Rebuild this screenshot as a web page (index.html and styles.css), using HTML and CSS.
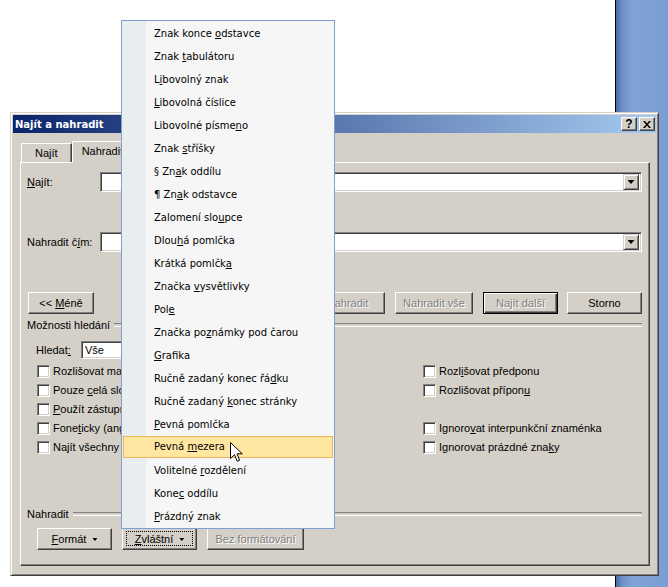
FILE: index.html
```html
<!DOCTYPE html>
<html lang="cs">

<head>
  <meta charset="UTF-8">
  <meta name="viewport" content="width=device-width, initial-scale=1.0">
  <title>Najít a nahradit</title>
  <link rel="stylesheet" href="styles.css">
</head>

<body>
  <div class="desktop">
    <div class="document"></div>
    <div class="workspace"></div>
  </div>

  <div class="dialog">
    <div class="titlebar">
      <span class="title">Najít a nahradit</span>
      <div class="title-buttons">
        <span class="tb-btn help">?</span>
        <span class="tb-btn">
          <svg width="8" height="7" viewBox="0 0 8 7"><path d="M0 0h2l2 2.5 2-2.5h2L5 3.5 8 7H6L4 4.5 2 7H0l3-3.5z" fill="#000"/></svg>
        </span>
      </div>
    </div>

    <div class="tabs">
      <div class="tab">Na<u>j</u>ít</div>
      <div class="tab active">Nahradit</div>
      <div class="tab">Přejít na</div>
    </div>

    <div class="panel">
      <div class="field-row">
        <label class="field-label"><u>N</u>ajít:</label>
        <div class="combo"><span class="combo-btn"></span></div>
      </div>

      <div class="field-row second">
        <label class="field-label">Nahradit č<u>í</u>m:</label>
        <div class="combo"><span class="combo-btn"></span></div>
      </div>

      <div class="button-row">
        <button class="btn less">&lt;&lt; <u>M</u>éně</button>
        <button class="btn off replace">Nahradit</button>
        <button class="btn off replace-all">Nahradit vše</button>
        <button class="btn off default">Najít další</button>
        <button class="btn cancel">Storno</button>
      </div>

      <div class="group"><span>Možnosti hledání</span></div>

      <div class="search-row">
        <label class="search-label">Hledat<u>:</u></label>
        <div class="combo small">Vše</div>
      </div>

      <div class="options">
        <div class="check"><span class="box"></span><span>Rozlišovat malá a velká písmena</span></div>
        <div class="check"><span class="box"></span><span>Rozl<u>i</u>šovat předponu</span></div>
        <div class="check"><span class="box"></span><span>Pouze <u>c</u>elá slova</span></div>
        <div class="check"><span class="box"></span><span>Rozlišovat přípon<u>u</u></span></div>
        <div class="check"><span class="box"></span><span><u>P</u>oužít zástupné znaky</span></div>
        <div></div>
        <div class="check"><span class="box"></span><span>Fone<u>t</u>icky (angličtina)</span></div>
        <div class="check"><span class="box"></span><span>Ignoro<u>v</u>at interpunkční znaménka</span></div>
        <div class="check"><span class="box"></span><span>Najít všechny tvary slova (angličtina)</span></div>
        <div class="check"><span class="box"></span><span>Ignorovat prázdné zna<u>k</u>y</span></div>
      </div>

      <div class="group replace-group"><span>Nahradit</span></div>

      <div class="format-row">
        <button class="btn format"><u>F</u>ormát <span class="caret"></span></button>
        <button class="btn format focused"><u>Z</u>vláštní <span class="caret"></span></button>
        <button class="btn off plain">Bez formátování</button>
      </div>
    </div>
  </div>

  <ul class="menu">
    <li>Znak konce <u>o</u>dstavce</li>
    <li>Znak <u>t</u>abulátoru</li>
    <li>L<u>i</u>bovolný znak</li>
    <li><u>L</u>ibovolná číslice</li>
    <li>Libovolné písme<u>n</u>o</li>
    <li>Znak <u>s</u>tříšky</li>
    <li>§ Zn<u>a</u>k oddílu</li>
    <li>¶ Zn<u>a</u>k odstavce</li>
    <li>Zalomení slo<u>u</u>pce</li>
    <li>Dlou<u>h</u>á pomlčka</li>
    <li>Krátká pomlčk<u>a</u></li>
    <li>Značka <u>v</u>ysvětlivky</li>
    <li>Pol<u>e</u></li>
    <li>Značka po<u>z</u>námky pod čarou</li>
    <li><u>G</u>rafika</li>
    <li>Ručně zadaný konec řá<u>d</u>ku</li>
    <li>Ručně zadaný <u>k</u>onec stránky</li>
    <li><u>P</u>evná pomlčka</li>
    <li class="hover">Pevná <u>m</u>ezera</li>
    <li>Volitelné <u>r</u>ozdělení</li>
    <li>Kone<u>c</u> oddílu</li>
    <li><u>P</u>rázdný znak</li>
  </ul>

  <svg class="cursor" width="13" height="21" viewBox="0 0 13 21">
    <path d="M0.5 0.5V16.5L4.5 12.7L7.2 19.2L9.6 18.2L7 11.8H12.3Z" fill="#fff" stroke="#000" stroke-width="1" stroke-linejoin="miter"/>
  </svg>
</body>

</html>
```

FILE: styles.css
```css
* {
  box-sizing: border-box;
}

body {
  margin: 0;
  width: 668px;
  height: 587px;
  overflow: hidden;
  position: relative;
  background-color: #ffffff;
  font-family: "Liberation Sans", Arial, sans-serif;
  font-size: 11px;
  line-height: 13px;
  color: #000000;
}

/* background: word document + app workspace */
.desktop {
  display: flex;
  height: 587px;
}

.document {
  width: 616px;
  background-color: #ffffff;
  border-right: 1px solid #000000;
}

.workspace {
  flex: 1;
  background: linear-gradient(to right, #4a6b9e, #6d91c6 6px, #7fa3d6 16px, #7b9ed2);
}

/* dialog window */
.dialog {
  position: absolute;
  left: 10px;
  top: 112px;
  width: 649px;
  height: 464px;
  padding: 2px;
  background-color: #d4d0c8;
  border: 1px solid;
  border-color: #d4d0c8 #404040 #404040 #d4d0c8;
  box-shadow: inset 1px 1px #ffffff, inset -1px -1px #808080;
  display: flex;
  flex-direction: column;
}

.titlebar {
  height: 18px;
  display: flex;
  align-items: center;
  justify-content: space-between;
  padding: 0 1px 0 2px;
  background: linear-gradient(to right, #0a246a, #a6caf0);
  color: #ffffff;
}

.title {
  font-family: "DejaVu Sans", sans-serif;
  font-weight: bold;
  font-size: 10px;
}

.title-buttons {
  display: flex;
  gap: 2px;
}

.tb-btn {
  width: 16px;
  height: 14px;
  display: flex;
  align-items: center;
  justify-content: center;
  background-color: #d4d0c8;
  border: 1px solid;
  border-color: #ffffff #404040 #404040 #ffffff;
  box-shadow: inset -1px -1px #808080;
  color: #000000;
}

.tb-btn.help {
  font-weight: bold;
  font-size: 12px;
}

/* tabs */
.tabs {
  display: flex;
  align-items: flex-end;
  height: 21px;
  margin: 8px 0 0 8px;
  position: relative;
  z-index: 1;
}

.tab {
  height: 19px;
  padding: 0 13px;
  display: flex;
  align-items: center;
  border: 1px solid;
  border-bottom: none;
  border-color: #ffffff #404040 transparent #ffffff;
  box-shadow: inset -1px 0 #808080;
}

.tab.active {
  height: 22px;
  margin-bottom: -1px;
  padding: 0 9px 2px 9px;
  background-color: #d4d0c8;
}

.panel {
  flex: 1;
  margin: 0 6px 7px 7px;
  padding: 0 7px 0 6px;
  border: 1px solid;
  border-color: #ffffff #404040 #404040 #ffffff;
  box-shadow: inset -1px -1px #808080;
  display: flex;
  flex-direction: column;
}

.field-row {
  display: flex;
  align-items: center;
  margin-top: 9px;
  height: 20px;
}

.field-row.second {
  margin-top: 40px;
}

.field-label {
  width: 73px;
}

.combo {
  flex: 1;
  height: 20px;
  display: flex;
  align-items: center;
  justify-content: flex-end;
  padding-right: 2px;
  background-color: #ffffff;
  border: 1px solid;
  border-color: #808080 #ffffff #ffffff #808080;
  box-shadow: inset 1px 1px #404040, inset -1px -1px #d4d0c8;
}

.combo.small {
  flex: none;
  width: 95px;
  height: 18px;
  justify-content: flex-start;
  padding: 0 0 0 3px;
}

.combo-btn {
  width: 16px;
  height: 16px;
  display: flex;
  align-items: center;
  justify-content: center;
  background-color: #d4d0c8;
  border: 1px solid;
  border-color: #d4d0c8 #404040 #404040 #d4d0c8;
  box-shadow: inset 1px 1px #ffffff, inset -1px -1px #808080;
}

.combo-btn::after {
  content: "";
  width: 7px;
  height: 4px;
  background-color: #000000;
  clip-path: polygon(0 0, 100% 0, 50% 100%);
}

/* buttons */
.btn {
  display: block;
  height: 22px;
  padding: 0;
  font: inherit;
  line-height: 19px;
  text-align: center;
  white-space: nowrap;
  color: #000000;
  background-color: #d4d0c8;
  border: 1px solid;
  border-color: #ffffff #404040 #404040 #ffffff;
  box-shadow: inset -1px -1px #808080;
  position: relative;
}

.btn.off {
  color: #808080;
  text-shadow: 1px 1px #ffffff;
}

.btn.default {
  border-color: #000000;
  box-shadow: inset 1px 1px #ffffff, inset -1px -1px #404040, inset -2px -2px #808080;
}

.button-row {
  display: flex;
  margin-top: 40px;
}

.less {
  width: 66px;
  margin-left: 1px;
}

.replace {
  width: 75px;
  margin-left: auto;
}

.replace-all {
  width: 78px;
  margin-left: 10px;
}

.default {
  width: 75px;
  margin-left: 10px;
}

.cancel {
  width: 75px;
  margin-left: 9px;
}

/* group headings */
.group {
  display: flex;
  align-items: center;
  gap: 4px;
  height: 14px;
  margin-top: 4px;
}

.group::after {
  content: "";
  flex: 1;
  height: 2px;
  border-top: 1px solid #808080;
  border-bottom: 1px solid #ffffff;
}

.replace-group {
  margin-top: 50px;
}

.search-row {
  display: flex;
  align-items: center;
  margin-top: 9px;
  padding-left: 9px;
}

.search-label {
  width: 45px;
}

.options {
  display: grid;
  grid-template-columns: 386px 1fr;
  grid-auto-rows: 19px;
  margin: 3px 0 0 10px;
}

.check {
  display: flex;
  align-items: center;
  gap: 3px;
  white-space: nowrap;
}

.box {
  flex: none;
  width: 13px;
  height: 13px;
  background-color: #ffffff;
  border: 1px solid;
  border-color: #808080 #ffffff #ffffff #808080;
  box-shadow: inset 1px 1px #404040, inset -1px -1px #d4d0c8;
}

.format-row {
  display: flex;
  gap: 10px;
  margin: 7px 0 0 10px;
}

.format {
  width: 75px;
}

.plain {
  width: 97px;
}

.caret {
  display: inline-block;
  vertical-align: middle;
  width: 5px;
  height: 3px;
  margin-left: 3px;
  background-color: #000000;
  clip-path: polygon(0 0, 100% 0, 50% 100%);
}

.focused::after {
  content: "";
  position: absolute;
  left: 3px;
  top: 2px;
  right: 3px;
  bottom: 3px;
  border: 1px dotted #000000;
}

/* special characters menu */
.menu {
  position: absolute;
  left: 121px;
  top: 20px;
  width: 214px;
  height: 509px;
  margin: 0;
  padding: 1px 0;
  list-style: none;
  border: 1px solid #7d9fd3;
  background: linear-gradient(to right, #e8eef0 24px, #f6f6f6 24px);
  font-family: "DejaVu Sans", sans-serif;
  font-size: 10px;
  z-index: 5;
}

.menu li {
  height: 23px;
  line-height: 23px;
  padding-left: 32px;
  white-space: nowrap;
}

.menu li.hover {
  height: 22px;
  line-height: 20px;
  margin: 0 1px 1px 1px;
  padding-left: 30px;
  background-color: #ffe7a2;
  border: 1px solid #e9b65c;
}

.cursor {
  position: absolute;
  left: 230px;
  top: 442px;
  z-index: 10;
}
```
